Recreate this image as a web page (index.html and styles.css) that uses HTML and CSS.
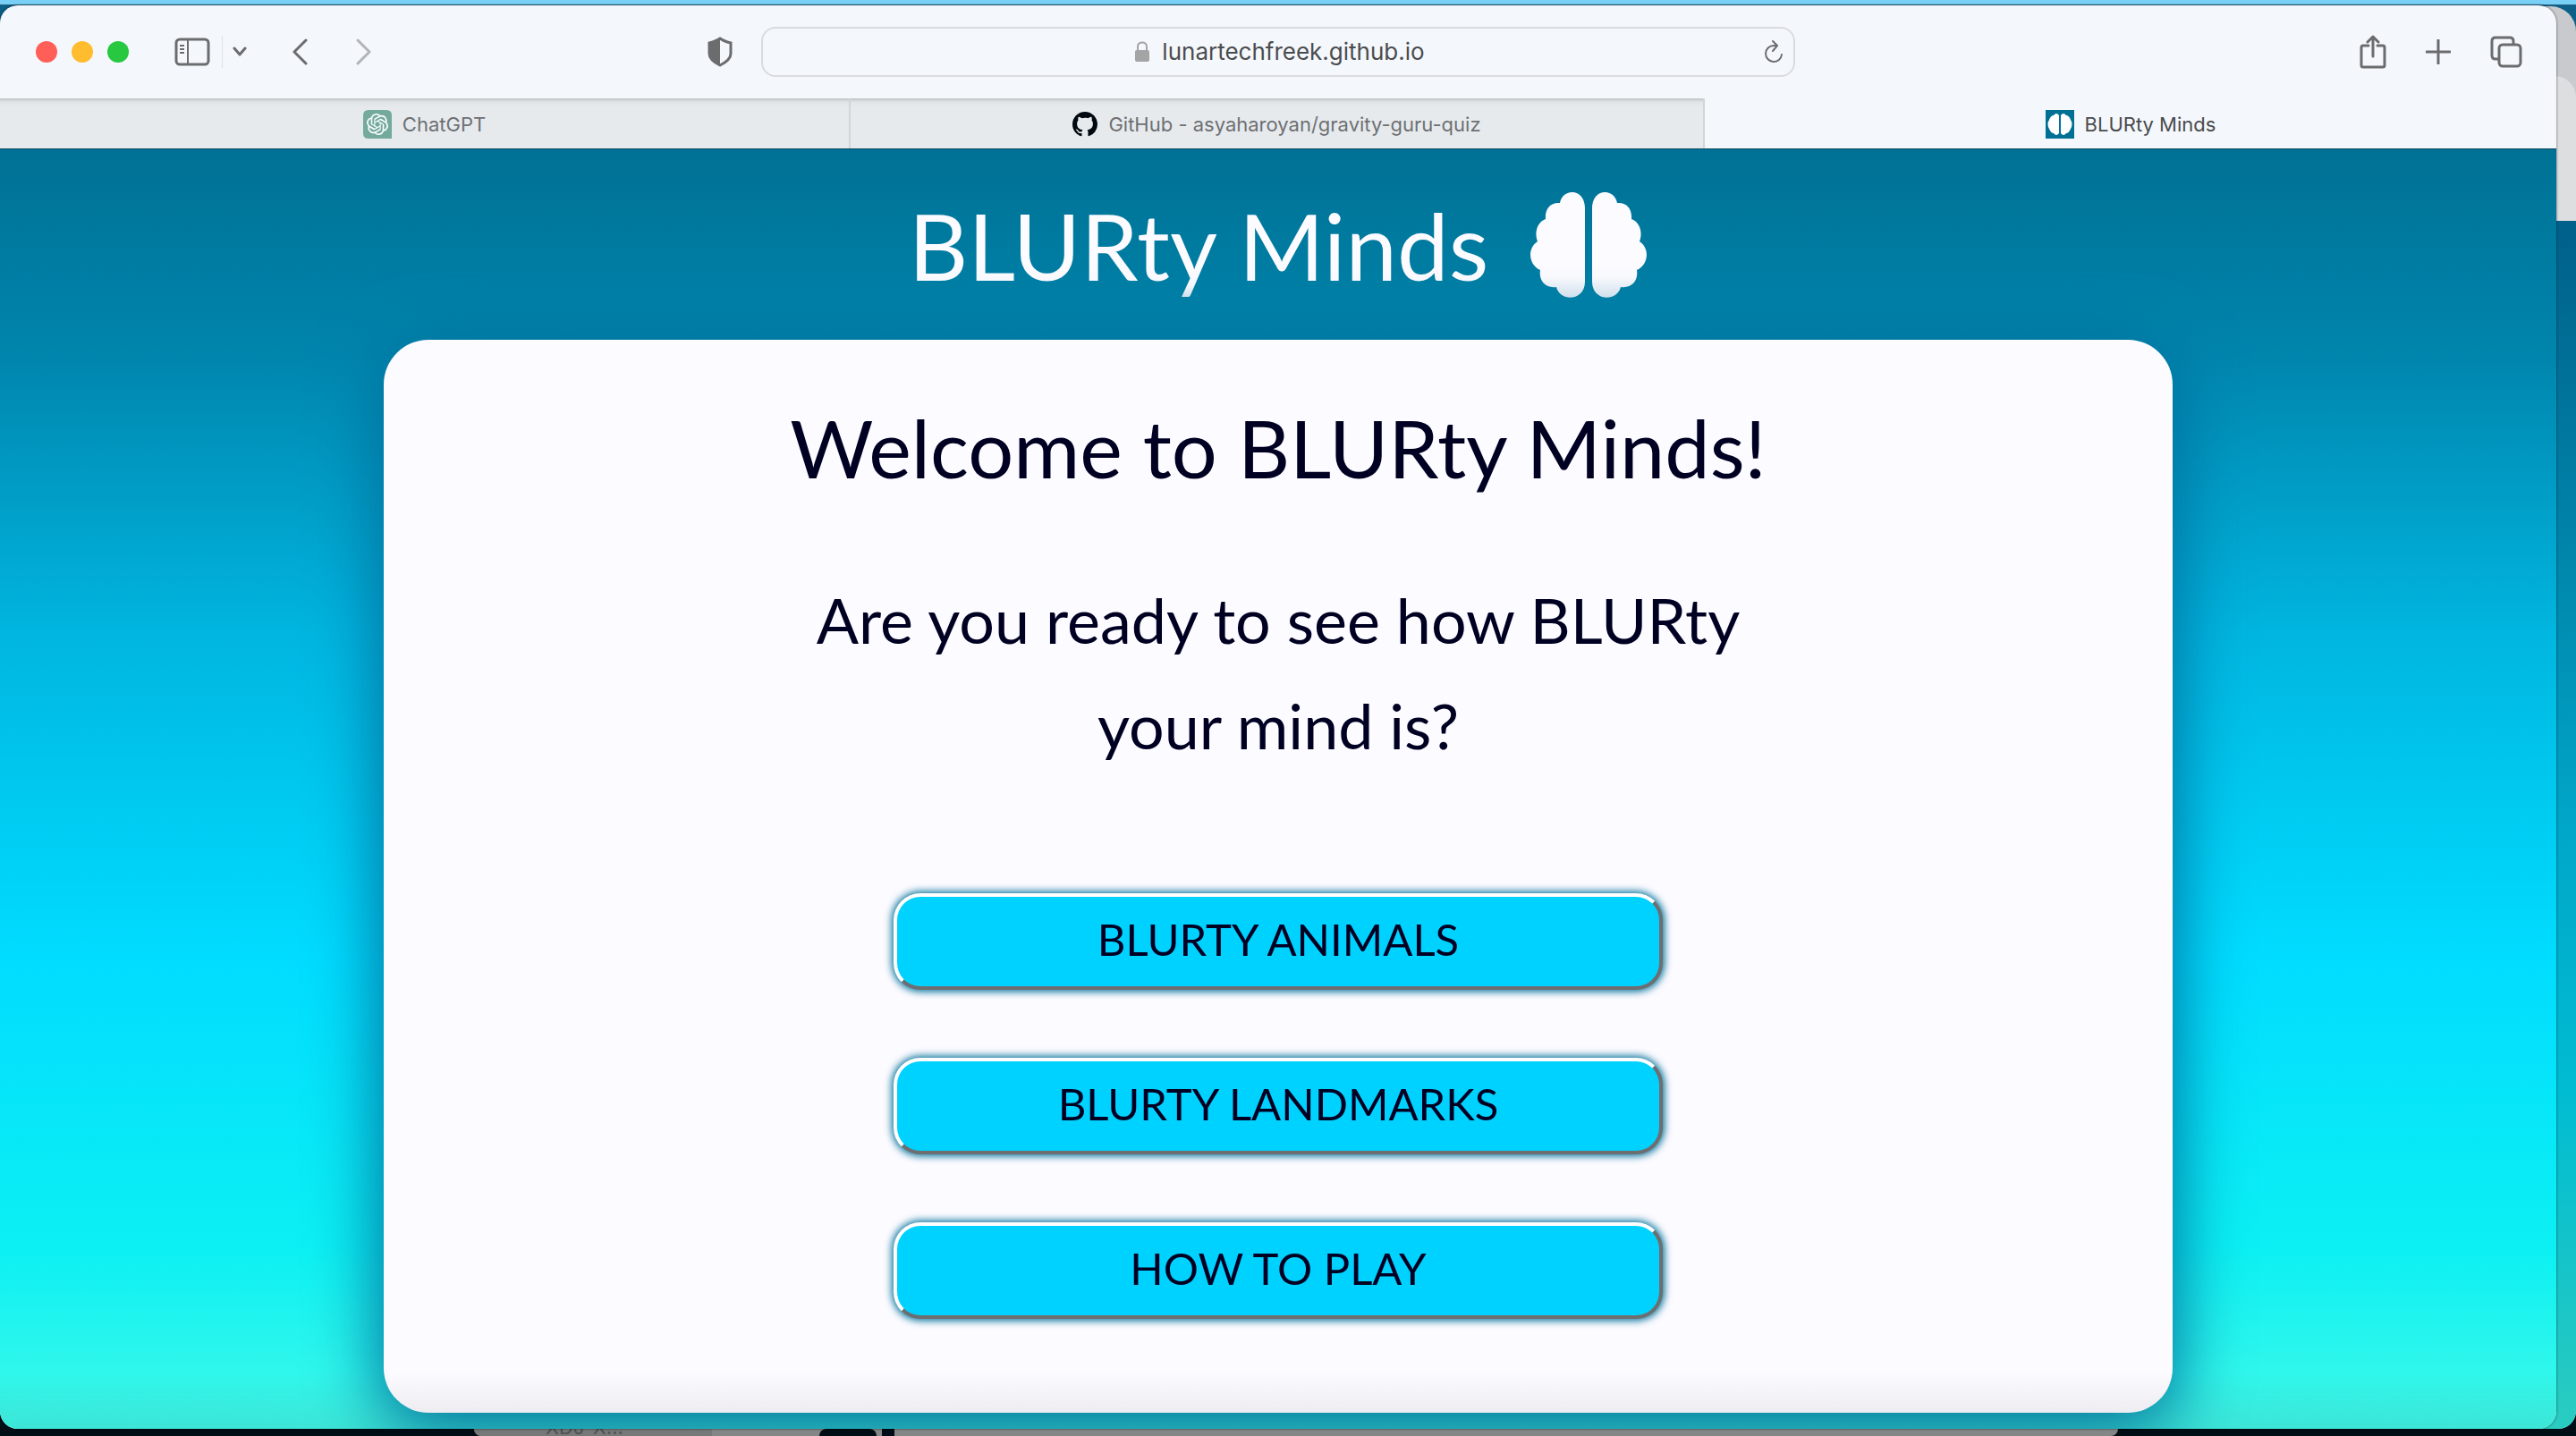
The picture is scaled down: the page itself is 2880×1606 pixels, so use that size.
FILE: index.html
```html
<!DOCTYPE html>
<html lang="en">
<head>
<meta charset="utf-8">
<title>BLURty Minds</title>
<link rel="stylesheet" href="styles.css">
</head>
<body>
<div class="desktop">
  <div class="menu-strip"></div>
  <div class="stage">
    <div class="back-window" aria-hidden="true">
      <div class="back-bar"></div>
      <div class="back-pane"></div>
      <div class="back-body"></div>
    </div>
    <div class="window">
      <header class="toolbar">
        <div class="tools tools-left">
          <div class="lights"><span class="light red"></span><span class="light amber"></span><span class="light green"></span></div>
          <button class="tool sidebar" aria-label="Sidebar"><svg width="40" height="32" viewBox="0 0 40 32"><rect x="2" y="2" width="36" height="28" rx="4" fill="none" stroke="currentColor" stroke-width="3"/><path d="M15 2v28M6 9h5M6 13h5M6 17h5" fill="none" stroke="currentColor" stroke-width="2"/></svg></button>
          <span class="rule"></span>
          <button class="tool chevron" aria-label="Tab groups"><svg width="16" height="12" viewBox="0 0 16 12"><path d="M2 2l6 7 6-7" fill="none" stroke="currentColor" stroke-width="3" stroke-linecap="round" stroke-linejoin="round"/></svg></button>
          <button class="tool back" aria-label="Back"><svg width="18" height="30" viewBox="0 0 18 30"><path d="M16 2L3 15l13 13" fill="none" stroke="currentColor" stroke-width="3" stroke-linecap="round" stroke-linejoin="round"/></svg></button>
          <button class="tool forward" aria-label="Forward"><svg width="18" height="30" viewBox="0 0 18 30"><path d="M2 2l13 13L2 28" fill="none" stroke="currentColor" stroke-width="3" stroke-linecap="round" stroke-linejoin="round"/></svg></button>
          <button class="tool shield" aria-label="Privacy report"><svg width="28" height="34" viewBox="0 0 28 34"><path d="M14 2c4 3 8 4 12 5v12c0 6-6 10-12 13C8 29 2 25 2 19V7c4-1 8-2 12-5z" fill="none" stroke="currentColor" stroke-width="3"/><path d="M14 2v30C8 29 2 25 2 19V7c4-1 8-2 12-5z" fill="currentColor"/></svg></button>
        </div>
        <div class="address">
          <div class="site">
            <svg width="16" height="24" viewBox="0 0 16 24"><rect y="10" width="16" height="13" rx="2" fill="#a2a4a6"/><path d="M3 11V6c0-6 10-6 10 0v5" fill="none" stroke="#a2a4a6" stroke-width="2"/></svg>
            <span>lunartechfreek.github.io</span>
          </div>
          <button class="tool reload" aria-label="Reload"><svg width="22" height="28" viewBox="0 0 22 28"><path d="M21 17a9 9 0 1 1-9-10h4M11 2l5 5-5 6" fill="none" stroke="currentColor" stroke-width="2" stroke-linecap="round" stroke-linejoin="round"/></svg></button>
        </div>
        <div class="tools tools-right">
          <button class="tool" aria-label="Share"><svg width="30" height="38" viewBox="0 0 30 38"><path d="M10 12H4q-2 0-2 2v20q0 2 2 2h22q2 0 2-2V14q0-2-2-2h-6M15 24V2M9 8l6-6 6 6" fill="none" stroke="currentColor" stroke-width="3" stroke-linejoin="round" stroke-linecap="round"/></svg></button>
          <button class="tool" aria-label="New tab"><svg width="28" height="28" viewBox="0 0 28 28"><path d="M14 1v26M1 14h26" stroke="currentColor" stroke-width="3" stroke-linecap="round"/></svg></button>
          <button class="tool" aria-label="Tab overview"><svg width="36" height="36" viewBox="0 0 36 36"><rect x="10" y="10" width="24" height="24" rx="4" fill="none" stroke="currentColor" stroke-width="3"/><path d="M9 26H6q-4 0-4-4V6q0-4 4-4h16q4 0 4 4v3" fill="none" stroke="currentColor" stroke-width="3"/></svg></button>
        </div>
      </header>
      <nav class="tabs">
        <a class="tab" href="#chat"><svg width="32" height="32" viewBox="0 0 32 32"><path d="M6 0h20q6 0 6 6v26H6q-6 0-6-6V6q0-6 6-6z" fill="#74aa9c"/><g transform="translate(4 4)"><path fill="#fff" d="M22.28 9.82a5.98 5.98 0 0 0-.52-4.91 6.05 6.05 0 0 0-6.51-2.9A6.07 6.07 0 0 0 4.98 4.18a5.98 5.98 0 0 0-4 2.9 6.05 6.05 0 0 0 .74 7.1 5.98 5.98 0 0 0 .51 4.91 6.05 6.05 0 0 0 6.52 2.9A5.98 5.98 0 0 0 13.26 24a6.06 6.06 0 0 0 5.77-4.21 5.99 5.99 0 0 0 4-2.9 6.06 6.06 0 0 0-.75-7.07zm-9.02 12.61a4.48 4.48 0 0 1-2.88-1.04l.14-.08 4.78-2.76a.8.8 0 0 0 .39-.68v-6.74l2.02 1.17a.07.07 0 0 1 .04.05v5.58a4.5 4.5 0 0 1-4.49 4.5zM3.6 18.3a4.47 4.47 0 0 1-.54-3.01l.14.09 4.78 2.76a.77.77 0 0 0 .78 0l5.85-3.37v2.33a.08.08 0 0 1-.04.06L9.74 19.95A4.5 4.5 0 0 1 3.6 18.3zM2.34 7.9a4.49 4.49 0 0 1 2.37-1.98V11.6a.77.77 0 0 0 .38.68l5.82 3.35-2.02 1.17a.08.08 0 0 1-.07 0l-4.83-2.79A4.5 4.5 0 0 1 2.34 7.87zm16.6 3.85-5.84-3.39L15.12 7.2a.08.08 0 0 1 .07 0l4.83 2.79a4.49 4.49 0 0 1-.68 8.1v-5.67a.79.79 0 0 0-.4-.67zm2.01-3.02-.14-.09-4.78-2.78a.78.78 0 0 0-.78 0L9.41 9.23V6.9a.07.07 0 0 1 .03-.06l4.83-2.79a4.5 4.5 0 0 1 6.68 4.66zM8.31 12.86l-2.02-1.16a.08.08 0 0 1-.04-.06V6.07a4.5 4.5 0 0 1 7.37-3.45l-.14.08L8.7 5.46a.8.8 0 0 0-.39.68zm1.1-2.36 2.6-1.5 2.6 1.5v3l-2.6 1.5-2.6-1.5z"/></g></svg><span>ChatGPT</span></a>
        <a class="tab" href="#github"><svg width="28" height="28" viewBox="0 0 16 16"><path fill="#010810" d="M8 0C3.58 0 0 3.58 0 8c0 3.54 2.29 6.53 5.47 7.59.4.07.55-.17.55-.38 0-.19-.01-.82-.01-1.49-2.01.37-2.53-.49-2.69-.94-.09-.23-.48-.94-.82-1.13-.28-.15-.68-.52-.01-.53.63-.01 1.08.58 1.23.82.72 1.21 1.87.87 2.33.66.07-.52.28-.87.51-1.07-1.78-.2-3.64-.89-3.64-3.95 0-.87.31-1.59.82-2.15-.08-.2-.36-1.02.08-2.12 0 0 .67-.21 2.2.82A7.6 7.6 0 0 1 8 3.86c.68 0 1.36.09 2 .27 1.53-1.04 2.2-.82 2.2-.82.44 1.1.16 1.92.08 2.12.51.56.82 1.27.82 2.15 0 3.07-1.87 3.75-3.65 3.95.29.25.54.73.54 1.48 0 1.07-.01 1.93-.01 2.2 0 .21.15.46.55.38A8 8 0 0 0 16 8c0-4.42-3.58-8-8-8z"/></svg><span>GitHub - asyaharoyan/gravity-guru-quiz</span></a>
        <a class="tab active" href="#blurty" aria-current="page"><svg width="32" height="32" viewBox="0 0 32 32"><rect width="32" height="32" fill="#007194"/><path d="M15 6v20q-3 4-6 0-3 0-5-5-3-5 0-10Q6 6 9 6q3-4 6 0zM17 6v20q3 4 6 0 3 0 5-5 3-5 0-10-2-5-5-5-3-4-6 0z" fill="#fff"/></svg><span>BLURty Minds</span></a>
      </nav>
      <main class="page">
        <h1 class="brand"><span class="brand-name">BLURty Minds</span>
          <svg class="brain" width="132" height="118" viewBox="0 0 132 118"><defs><linearGradient id="fade" gradientUnits="userSpaceOnUse" x1="0" y1="0" x2="0" y2="118"><stop offset=".8" stop-color="#fcfbff"/><stop offset="1" stop-color="#dfe8f2"/></linearGradient></defs><g fill="url(#fade)"><path id="lobe" d="M62 18C62-5 37-5 34 12 23 11 17 19 18 30 9 33 5 45 9 55-3 63-1 81 12 87 10 99 18 108 30 106 34 123 62 122 62 100z"/><use href="#lobe" transform="matrix(-1 0 0 1 132 0)"/></g></svg>
        </h1>
        <section class="card">
          <h2 class="welcome">Welcome to BLURty Minds!</h2>
          <p class="question">Are you ready to see how BLURty your mind is?</p>
          <div class="choices">
            <button class="choice">BLURTY ANIMALS</button>
            <button class="choice">BLURTY LANDMARKS</button>
            <button class="choice">HOW TO PLAY</button>
          </div>
        </section>
      </main>
    </div>
  </div>
  <div class="dock-strip" aria-hidden="true"><div class="dock-window"><span class="dock-tab">XDJ-X...</span><span class="dock-dot"></span><span class="dock-mark"></span></div></div>
</div>
</body>
</html>
```
FILE: styles.css
```css
* { box-sizing: border-box; }
body { margin: 0; font-family: Inter, "Liberation Sans", sans-serif; }
button { padding: 0; border: 0; background: none; font: inherit; }
svg { display: block; flex: none; }

.desktop { display: flex; flex-direction: column; min-height: 100vh; background: #010d16; overflow: hidden; }
.menu-strip { height: 6px; background: #79d0f6; border-bottom: 1px solid #236080; }
.stage { position: relative; flex: 1; display: flex; padding-right: 22px; background: linear-gradient(#0c5f88 50%, #010d16 90%); }

.back-window { position: absolute; inset: 1px 0 0 auto; width: 120px; display: flex; flex-direction: column; border-radius: 0 28px 20px 0; overflow: hidden; background: #c8cacd; }
.back-bar { height: 78px; }
.back-pane { height: 162px; background: #dddee0; border-radius: 0 24px 0 0; }
.back-body { flex: 1; background: linear-gradient(#00608a, #0082a8 25%, #00a6c8 50%, #00bcd2 72%, #2accc0); }

.window { position: relative; flex: 1; display: flex; flex-direction: column; border-radius: 20px; overflow: hidden; background: #f4f8fc; box-shadow: 0 0 3px rgba(0, 0, 0, .6); }

.toolbar { display: grid; grid-template-columns: 851fr 1156fr 851fr; align-items: center; height: 104px; color: #6b6c6e; }
.tools { display: flex; align-items: center; }
.tools-left { padding-left: 40px; }
.tools-right { justify-content: flex-end; gap: 44px; padding-right: 38px; }
.tool { display: flex; color: inherit; }
.lights { display: flex; gap: 16px; }
.light { width: 24px; height: 24px; border-radius: 50%; }
.red { background: #ff5f57; }
.amber { background: #febc2e; }
.green { background: #28c840; }
.sidebar { margin-left: 51px; }
.rule { width: 1px; height: 36px; margin: 0 11px 0 13px; background: #e0e3e6; }
.back { margin-left: 50px; }
.forward { margin-left: 54px; color: #b2b4b7; }
.shield { margin-left: auto; margin-right: 32px; }
.address { display: flex; align-items: center; height: 56px; padding-right: 12px; border: 2px solid #d9dbde; border-radius: 16px; }
.site { flex: 1; display: flex; justify-content: center; align-items: center; gap: 14px; padding-left: 38px; color: #4b4c4e; font-size: 26px; line-height: 32px; }

.tabs { display: grid; grid-template-columns: 951fr 955fr 952fr; height: 57px; border-bottom: 1px solid #0b4a63; }
.tab { display: flex; justify-content: center; align-items: center; gap: 12px; padding-top: 2px; border-right: 2px solid #d1d5d8; background: linear-gradient(#bfc3c6, #e0e4e7 4px, #e6eaed 10px); color: #6e7073; font-size: 22px; line-height: 28px; text-decoration: none; }
.tab.active { border: 0; background: #f4f8fc; color: #4a4b4d; }

.page { position: relative; flex: 1; display: flex; flex-direction: column; align-items: center; padding: 47px 0 18px; background: linear-gradient(#007194, #0085ad 16%, #00b6e0 38%, #00dcff 63%, #0cf0f3 86%, #40fae8); color: #000022; font-family: Lato, "Open Sans", sans-serif; }
/* soft shade along the lower edge of the viewport */
.page::after { content: ""; position: absolute; inset: auto 0 0; height: 64px; background: linear-gradient(transparent, rgba(30, 20, 40, .09)); pointer-events: none; }
.brand { display: flex; align-items: center; gap: 46px; margin: 0; font-size: 103px; font-weight: 400; line-height: 120px; }
.brand-name { background: linear-gradient(#fcfbff 88%, #dbe5ef); background-clip: text; -webkit-background-clip: text; color: transparent; }
.card { flex: 1; display: flex; flex-direction: column; align-items: center; width: 70%; margin-top: 46px; padding: 60px 0 105px; border-radius: 50px; background: #fcfbff; box-shadow: 0 12px 76px 6px #006f9c; }
.welcome { margin: 0; font-size: 90px; font-weight: 400; line-height: 120px; }
.question { width: 56%; margin: 74px 0 0; font-size: 70px; line-height: 118px; text-align: center; }
.choices { display: flex; flex-direction: column; gap: 76px; width: 43%; margin-top: auto; }
.choice { height: 108px; padding-bottom: 6px; border: 4px solid; border-color: #fff #6d6e70 #6d6e70 #fff; border-radius: 30px; background: #00d2ff; box-shadow: 0 0 8px 2px #00719a; color: #000022; font-size: 49px; line-height: 56px; }

.dock-strip { height: 8px; padding: 0 512px 0 530px; background: #010d16; }
.dock-window { display: flex; align-items: flex-end; height: 8px; background: #858688; border-radius: 0 0 16px 16px; overflow: hidden; }
.dock-tab { display: flex; align-items: flex-end; width: 266px; height: 8px; padding-left: 80px; background: #77787a; color: #505153; font-size: 22px; line-height: 20px; overflow: hidden; }
.dock-dot { width: 64px; height: 8px; margin-left: 120px; border-radius: 32px 32px 0 0; background: #010d16; }
.dock-mark { width: 14px; height: 8px; margin-left: 6px; background: #010d16; }
```
